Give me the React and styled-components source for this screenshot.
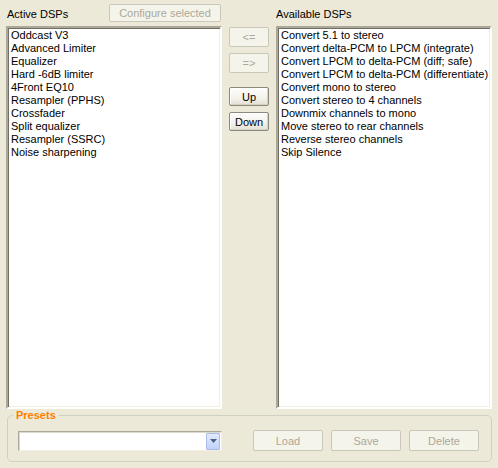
import React from "react";
import styled, { createGlobalStyle } from "styled-components";

const GlobalStyle = createGlobalStyle`
  html, body {
    margin: 0;
    padding: 0;
    background: #ece9d8;
  }
  body {
    font-family: Tahoma, "Liberation Sans", Arial, sans-serif;
    font-size: 11px;
    color: #000;
  }
`;

const Window = styled.div`
  width: 498px;
  height: 468px;
  box-sizing: border-box;
  background: #ece9d8;
  padding: 4px 6px 0 6px;
  display: flex;
  flex-direction: column;
`;

const Top = styled.div`
  display: flex;
  gap: 7px;
`;

const Column = styled.div`
  width: 216px;
  display: flex;
  flex-direction: column;
`;

const Header = styled.div`
  height: 22px;
  display: flex;
  align-items: flex-start;
  justify-content: space-between;
`;

const Label = styled.span`
  padding: 4px 0 0 ${(p) => p.$indent || 0}px;
  line-height: 13px;
`;

const ListBox = styled.div`
  height: 383px;
  box-sizing: border-box;
  background: #fff;
  border-style: solid;
  border-width: 2px;
  border-color: #aca899 #fff #fff #aca899;
  box-shadow: inset 1px 1px 0 #716f64, inset -1px -1px 0 #f1efe2;
  padding: 1px 2px;
  overflow: hidden;
`;

const Item = styled.div`
  height: 13px;
  line-height: 13px;
  padding-left: 1px;
  white-space: nowrap;
`;

const Middle = styled.div`
  width: 40px;
  padding-top: 23px;
  display: flex;
  flex-direction: column;
`;

const Button = styled.button`
  box-sizing: border-box;
  width: ${(p) => p.$w || 40}px;
  height: ${(p) => p.$h || 20}px;
  margin-top: ${(p) => p.$mt || 0}px;
  padding: 0;
  font-family: inherit;
  font-size: 11px;
  border-radius: 2px;
  color: ${(p) => (p.disabled ? "#aca899" : "#000")};
  border: 1px solid ${(p) => (p.disabled ? "#c9c7ba" : "#8c8a7f")};
  background: ${(p) =>
    p.disabled
      ? "#f5f4ea"
      : "linear-gradient(#fdfdfb 0%, #f3f2eb 60%, #e2dfd2 100%)"};
  box-shadow: ${(p) =>
    p.disabled ? "none" : "inset -1px -1px 0 #d6d2c2, inset 1px 1px 0 #fff"};
`;

const Group = styled.fieldset`
  margin: 1px 0 0 1px;
  width: 485px;
  height: 52px;
  box-sizing: border-box;
  border: 1px solid #d0d0bf;
  border-radius: 5px;
  padding: 10px 12px 0 10px;
  display: flex;
  align-items: flex-start;
`;

const Legend = styled.legend`
  color: #ff7f00;
  font-weight: bold;
  font-size: 11px;
  padding: 0 3px;
  margin-left: -5px;
  line-height: 11px;
`;

const Combo = styled.div`
  width: 204px;
  height: 20px;
  box-sizing: border-box;
  background: #fff;
  border-style: solid;
  border-width: 1px;
  border-color: #aca899 #f1efe2 #f1efe2 #aca899;
  box-shadow: inset 1px 1px 0 #dcdad0;
  display: flex;
  justify-content: flex-end;
  align-items: center;
  padding-right: 1px;
`;

const DropButton = styled.div`
  width: 14px;
  height: 17px;
  box-sizing: border-box;
  border: 1px solid #a8bbea;
  border-radius: 1px;
  background: linear-gradient(#e1eafe, #c1d3fb);
  display: flex;
  align-items: center;
  justify-content: center;
`;

const Actions = styled.div`
  margin-left: 31px;
  margin-top: -1px;
  display: flex;
  gap: 8px;
`;

const active = [
  "Oddcast V3",
  "Advanced Limiter",
  "Equalizer",
  "Hard -6dB limiter",
  "4Front EQ10",
  "Resampler (PPHS)",
  "Crossfader",
  "Split equalizer",
  "Resampler (SSRC)",
  "Noise sharpening",
];

const available = [
  "Convert 5.1 to stereo",
  "Convert delta-PCM to LPCM (integrate)",
  "Convert LPCM to delta-PCM (diff; safe)",
  "Convert LPCM to delta-PCM (differentiate)",
  "Convert mono to stereo",
  "Convert stereo to 4 channels",
  "Downmix channels to mono",
  "Move stereo to rear channels",
  "Reverse stereo channels",
  "Skip Silence",
];

export default function App() {
  return (
    <>
      <GlobalStyle />
      <Window>
        <Top>
          <Column>
            <Header>
              <Label $indent={1}>Active DSPs</Label>
              <Button disabled $w={112} $h={18} style={{ marginRight: 1 }}>
                Configure selected
              </Button>
            </Header>
            <ListBox>
              {active.map((a) => (
                <Item key={a}>{a}</Item>
              ))}
            </ListBox>
          </Column>
          <Middle>
            <Button disabled>&lt;=</Button>
            <Button disabled $mt={6}>=&gt;</Button>
            <Button $mt={14} $h={19}>Up</Button>
            <Button $mt={6} $h={19}>Down</Button>
          </Middle>
          <Column>
            <Header>
              <Label>Available DSPs</Label>
            </Header>
            <ListBox>
              {available.map((a) => (
                <Item key={a}>{a}</Item>
              ))}
            </ListBox>
          </Column>
        </Top>
        <Group>
          <Legend>Presets</Legend>
          <Combo>
            <DropButton>
              <svg width="7" height="4" viewBox="0 0 7 4">
                <path d="M0 0H7L3.5 4Z" fill="#4d6185" />
              </svg>
            </DropButton>
          </Combo>
          <Actions>
            <Button disabled $w={70} $h={21}>Load</Button>
            <Button disabled $w={70} $h={21}>Save</Button>
            <Button disabled $w={70} $h={21}>Delete</Button>
          </Actions>
        </Group>
      </Window>
    </>
  );
}
